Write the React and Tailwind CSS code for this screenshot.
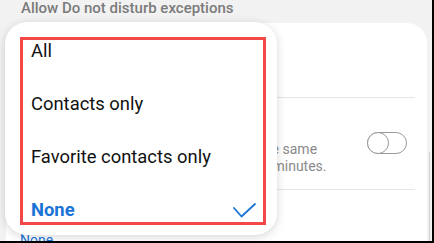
const OPTIONS = ['All', 'Contacts only', 'Favorite contacts only', 'None']

function Toggle() {
  return (
    <div className="relative w-[40px] h-[22px] rounded-full border border-[#9a9a9a] bg-white">
      <div className="absolute -left-px -top-px w-[22px] h-[22px] rounded-full border border-[#9a9a9a] bg-white" />
    </div>
  )
}

function Tick() {
  return (
    <svg width="23" height="15" viewBox="0 0 23 15" fill="none" className="mt-[1px]">
      <path d="M1 5 L8.5 13.5 L22 1" stroke="#1a73d6" strokeWidth="1.8" strokeLinecap="round" strokeLinejoin="round" />
    </svg>
  )
}

export default function App() {
  const selected = 'None'

  return (
    <div
      className="relative w-[434px] h-[243px] overflow-hidden bg-[#f2f2f2] border-r-2 border-b-2 border-black flex flex-col"
      style={{ fontFamily: 'Roboto, "Noto Sans", sans-serif' }}
    >
      <p className="h-[23px] shrink-0 pl-[21px] text-[15px] leading-[17px] font-medium text-[#7b7b7b]">
        Allow Do not disturb exceptions
      </p>

      {/* settings card behind the popup */}
      <div className="ml-[6px] mr-[5px] flex-1 rounded-t-[20px] bg-white pl-[14px] pr-[12px]">
        <div className="h-[75px] border-b border-[#e6e6e6] flex flex-col justify-center">
          <p className="text-[17px] leading-[22px] text-[#111]">Calls from</p>
          <p className="text-[14px] leading-[18px] text-[#1a73d6]">None</p>
        </div>

        <div className="h-[92px] border-b border-[#e6e6e6] flex items-center justify-between">
          <div className="flex flex-col">
            <p className="text-[17px] leading-[22px] text-[#111]">Repeat callers</p>
            <p className="mt-[7px] text-[14px] leading-[17px] text-[#8a8a8a] whitespace-nowrap">
              Allow a call when the caller rings from the same
              <br />
              phone number again within a span of 15 minutes.
            </p>
          </div>
          <div className="mr-[8px] mb-[2px]">
            <Toggle />
          </div>
        </div>

        <div className="pt-[21px]">
          <p className="text-[17px] leading-[20px] text-[#111]">Messages from</p>
          <p className="text-[14px] leading-[18px] text-[#1a73d6]">None</p>
        </div>
      </div>

      {/* scroll indicator */}
      <div className="absolute right-[2px] top-[152px] bottom-0 w-px bg-[#cfcfcf]" />

      {/* popup menu */}
      <div className="absolute left-[5px] top-[22px] w-[272px] h-[213px] rounded-[22px] bg-white shadow-[0_2px_10px_rgba(0,0,0,0.16)] pt-[2px]">
        {OPTIONS.map(opt => (
          <div key={opt} className="h-[53px] flex items-center justify-between pl-[26px] pr-[21px]">
            <span className={opt === selected ? 'text-[18.4px] font-bold text-[#1a73d6]' : 'text-[18.4px] text-[#111]'}>
              {opt}
            </span>
            {opt === selected && <Tick />}
          </div>
        ))}

        {/* annotation box */}
        <div className="absolute left-[15px] top-[15px] w-[246px] h-[188px] border-[3px] border-[#f24848] pointer-events-none" />
      </div>
    </div>
  )
}
